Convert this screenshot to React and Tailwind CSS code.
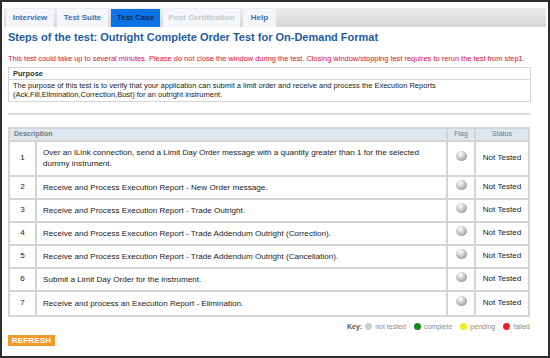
import React from 'react';

const tabs = [
  { label: 'Interview', w: 'w-[48px]' },
  { label: 'Test Suite', w: 'w-[51px]' },
  { label: 'Test Case', w: 'w-[49px]', active: true },
  { label: 'Post Certification', w: 'w-[77px]', disabled: true },
  { label: 'Help', w: 'w-[33px]' },
];

const steps = [
  'Over an iLink connection, send a Limit Day Order message with a quantity greater than 1 for the selected dummy instrument.',
  'Receive and Process Execution Report - New Order message.',
  'Receive and Process Execution Report - Trade Outright.',
  'Receive and Process Execution Report - Trade Addendum Outright (Correction).',
  'Receive and Process Execution Report - Trade Addendum Outright (Cancellation).',
  'Submit a Limit Day Order for the instrument.',
  'Receive and process an Execution Report - Elimination.',
];

const Ball = () => (
  <span className="inline-block w-[11px] h-[10px] rounded-full bg-[radial-gradient(circle_at_40%_30%,#ffffff_0%,#c8c8c8_45%,#7a7a7a_100%)]" />
);

const KeyDot = ({ color }) => (
  <span className={`inline-block w-[7px] h-[7px] rounded-full ${color}`} />
);

export default function App() {
  return (
    <div className="w-[550px] h-[358px] bg-[#2e2e2e] p-[2px] font-['Liberation_Sans',Arial,sans-serif]">
      <div className="h-full bg-white px-[2px] pt-[6px] flex flex-col">
        {/* Tabs */}
        <div className="h-[19px] shrink-0 bg-gradient-to-b from-[#ececec] to-[#d6d6d6] flex items-end gap-[3px] pl-[2px] pt-[1px]">
          {tabs.map(t => (
            <div
              key={t.label}
              className={`${t.w} h-full flex items-center justify-center text-[8px] font-bold ${
                t.active
                  ? 'bg-[#0a74e6] text-[#0c2b55]'
                  : t.disabled
                  ? 'bg-[#f4f6f9] text-[#c3c8d0]'
                  : 'bg-[#f4f6f9] text-[#3f6fae]'
              }`}
            >
              {t.label}
            </div>
          ))}
        </div>

        <div className="px-[4px]">
          <h1 className="mt-[3px] text-[11px] leading-[14px] font-bold text-[#1f5c9e]">
            Steps of the test: Outright Complete Order Test for On-Demand Format
          </h1>
          <p className="mt-[10px] text-[7.45px] leading-[9px] text-[#d0103a]">
            This test could take up to several minutes. Please do not close the window during the test. Closing window/stopping test requires to rerun the test from step1.
          </p>

          {/* Purpose */}
          <div className="mt-[4px] w-[523px] border border-[#d4d4d4]">
            <div className="h-[12px] px-[4px] flex items-center border-b border-[#d4d4d4] text-[7.5px] font-bold text-[#333]">
              Purpose
            </div>
            <div className="px-[4px] pt-[2px] pb-[2px] text-[7.5px] leading-[8.5px] text-[#222]">
              The purpose of this test is to verify that your application can submit a limit order and receive and process the Execution Reports (Ack,Fill,Elimination,Correction,Bust) for an outright instrument.
            </div>
          </div>

          <div className="mt-[11px] w-[522px] h-[2px] bg-[#d8d8d8]" />

          {/* Steps table */}
          <table className="mt-[12px] w-[522px] table-fixed border-separate border-spacing-0 border-2 border-[#d4d4d4] text-[8.1px] text-[#222]">
            <colgroup>
              <col className="w-[25px]" />
              <col />
              <col className="w-[28px]" />
              <col className="w-[54px]" />
            </colgroup>
            <thead>
              <tr className="bg-[#dde7ef] text-[#6c7c8a] h-[12px]">
                <th colSpan={2} className="text-left font-bold px-[4px] py-0 text-[7px] border-b-2 border-[#d4d4d4]">Description</th>
                <th className="font-normal text-[7px] border-l-2 border-b-2 border-[#d4d4d4]">Flag</th>
                <th className="font-normal text-[7px] border-l-2 border-b-2 border-[#d4d4d4]">Status</th>
              </tr>
            </thead>
            <tbody>
              {steps.map((s, i) => (
                <tr key={i} className={i === 0 ? 'h-[35px]' : 'h-[23px]'}>
                  <td className={`text-center ${i < steps.length - 1 ? 'border-b-2' : ''} border-[#d4d4d4]`}>{i + 1}</td>
                  <td className={`px-[6px] leading-[11px] border-l-2 ${i < steps.length - 1 ? 'border-b-2' : ''} border-[#d4d4d4]`}>{s}</td>
                  <td className={`text-center align-middle border-l-2 ${i < steps.length - 1 ? 'border-b-2' : ''} border-[#d4d4d4]`}>
                    <Ball />
                  </td>
                  <td className={`text-center border-l-2 ${i < steps.length - 1 ? 'border-b-2' : ''} border-[#d4d4d4]`}>Not Tested</td>
                </tr>
              ))}
            </tbody>
          </table>

          {/* Key */}
          <div className="w-[522px] mt-[5px] h-[9px] flex justify-end items-center gap-[3px] text-[7px] leading-[9px] text-[#8a8a8a]">
            <span className="font-bold text-[#555]">Key:</span>
            <KeyDot color="bg-[#cfcfcf]" />
            <span className="mr-[5px]">not tested</span>
            <KeyDot color="bg-[#0f8a1a]" />
            <span className="mr-[5px]">complete</span>
            <KeyDot color="bg-[#f2ee1a]" />
            <span className="mr-[5px]">pending</span>
            <KeyDot color="bg-[#e8202a]" />
            <span>failed</span>
          </div>

          <button className="block mt-[4px] w-[47px] h-[11px] bg-[#f19a2a] text-white text-[8px] font-bold leading-[11px] tracking-[0.2px]">
            REFRESH
          </button>
        </div>
      </div>
    </div>
  );
}
